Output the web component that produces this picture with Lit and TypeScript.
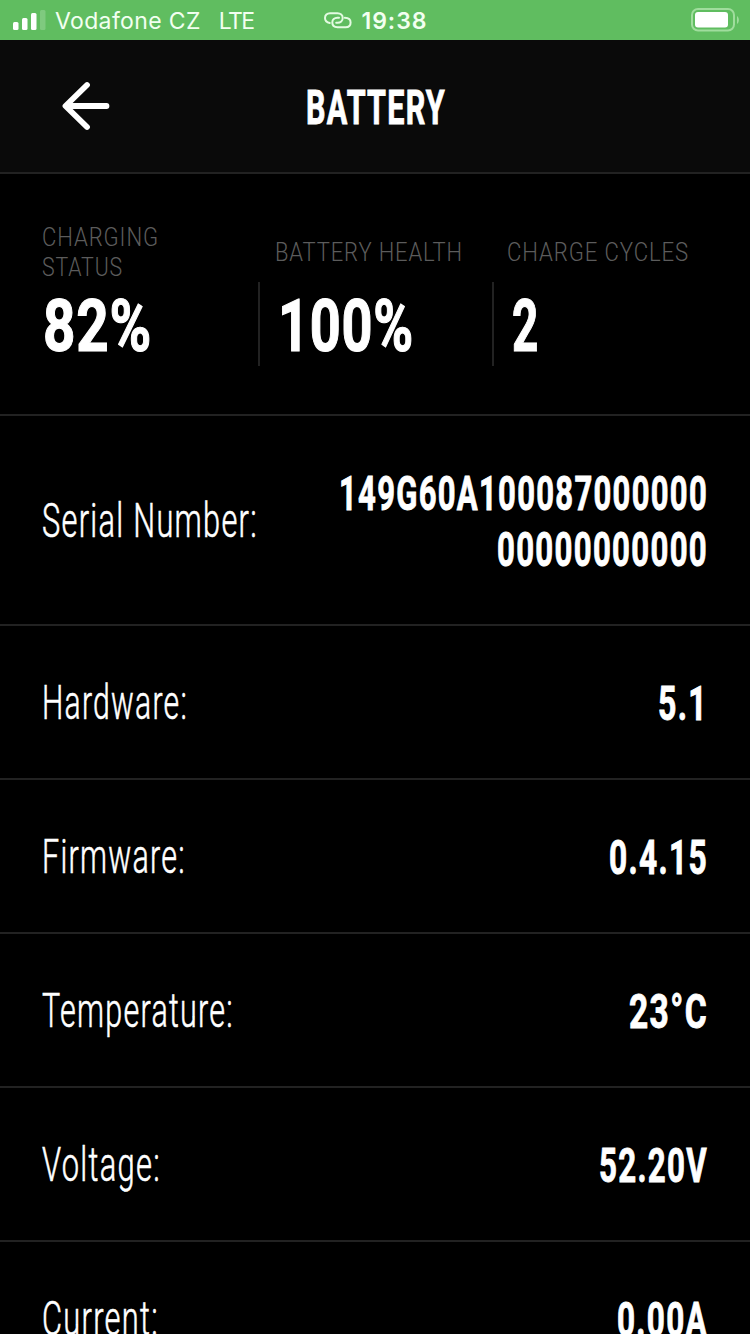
import { html, css, svg, LitElement } from 'lit';
import { customElement, property } from 'lit/decorators.js';

interface Line {
  text: string;
  width: number;
}

const stats = [
  {
    label: [{ text: 'CHARGING', width: 117 }, { text: 'STATUS', width: 81 }],
    value: { text: '82%', width: 109 },
  },
  {
    label: [{ text: 'BATTERY HEALTH', width: 188 }],
    value: { text: '100%', width: 136 },
  },
  {
    label: [{ text: 'CHARGE CYCLES', width: 182 }],
    value: { text: '2', width: 27 },
  },
];

const rows = [
  {
    label: { text: 'Serial Number:', width: 216 },
    value: [{ text: '149G60A100087000000', width: 369 }, { text: '00000000000', width: 211 }],
  },
  { label: { text: 'Hardware:', width: 146 }, value: [{ text: '5.1', width: 50 }] },
  { label: { text: 'Firmware:', width: 144 }, value: [{ text: '0.4.15', width: 99 }] },
  { label: { text: 'Temperature:', width: 192 }, value: [{ text: '23°C', width: 79 }] },
  { label: { text: 'Voltage:', width: 119 }, value: [{ text: '52.20V', width: 109 }] },
  { label: { text: 'Current:', width: 117 }, value: [{ text: '0.00A', width: 91 }] },
];

// One line of text: glyphs narrowed by a factor, then fitted to the exact width
@customElement('narrow-text')
class NarrowText extends LitElement {
  static styles = css`
    :host {
      display: block;
    }

    svg {
      display: block;
      overflow: visible;
    }

    text {
      fill: currentColor;
      stroke: currentColor;
      stroke-width: var(--text-stroke, 0);
    }
  `;

  @property({ type: Object }) line: Line = { text: '', width: 0 };
  @property({ type: Number }) height = 56;
  @property({ type: Number }) baseline = 44;
  @property({ type: Number }) narrow = 0.66;

  render() {
    const { text, width } = this.line;

    return html`
      <svg width=${width + 2} height=${this.height}>
        ${svg`<text
          transform="translate(1 0) scale(${this.narrow} 1)"
          y=${this.baseline}
          textLength=${width / this.narrow}
          lengthAdjust="spacingAndGlyphs"
        >${text}</text>`}
      </svg>
    `;
  }
}

@customElement('status-bar')
class StatusBar extends LitElement {
  static styles = css`
    :host {
      display: grid;
      grid-template-columns: 1fr auto 1fr;
      height: 40px;
      padding: 0 11px 0 13px;
      box-sizing: border-box;
      align-items: center;
      color: #f2fff0;
      background: #60bd60;
      font-family: Inter, 'Liberation Sans', sans-serif;
      font-size: 23px;
    }

    svg {
      display: block;
    }

    span {
      padding-top: 2px;
    }

    .carrier,
    .clock {
      display: flex;
      align-items: center;
    }

    .name {
      margin-left: 9px;
      letter-spacing: 0.35px;
    }

    .network {
      margin-left: 18px;
      letter-spacing: -1.6px;
    }

    .clock {
      gap: 9px;
      font-weight: 600;
      letter-spacing: 1px;
    }

    .battery {
      justify-self: end;
    }
  `;

  render() {
    return html`
      <div class="carrier">
        <svg width="33" height="20" viewBox="0 0 33 20" fill="#fff">
          <rect x="0" y="12" width="5.5" height="8" rx="1.5" />
          <rect x="9" y="8" width="5.5" height="12" rx="1.5" />
          <rect x="18" y="3" width="5.5" height="17" rx="1.5" />
          <rect x="27" y="0" width="5.5" height="20" rx="1.5" opacity="0.2" />
        </svg>
        <span class="name">Vodafone CZ</span>
        <span class="network">LTE</span>
      </div>
      <div class="clock">
        <svg width="28" height="18" viewBox="0 0 28 18" fill="none" stroke="#e4fbe2" stroke-width="2" stroke-linecap="round">
          <path d="M5.8 12C2.8 11.4 1 9.5 1 7C1 4.2 3 2.3 6 2.3H13.5C16.5 2.3 18.7 4.2 18.7 7C18.7 9.8 16.5 11.8 13.5 11.8H12.2" />
          <path d="M20.8 6.8C24.5 7 26.6 8.8 26.6 11.4C26.6 14.3 24.6 16.2 21.6 16.2H13.5C10.4 16.2 8.3 14.3 8.3 11.5C8.3 8.7 10.4 6.8 13.4 6.8H15" />
        </svg>
        <span>19:38</span>
      </div>
      <svg class="battery" width="48" height="24" viewBox="0 0 48 24">
        <rect x="1" y="1" width="42" height="21.5" rx="6" fill="none" stroke="#a0dd9d" stroke-width="2" />
        <rect x="4" y="4" width="33" height="15.5" rx="3" fill="#fff" />
        <path d="M46 8C48.5 10 48.5 14 46 16Z" fill="#a0dd9d" />
      </svg>
    `;
  }
}

@customElement('app-root')
class AppRoot extends LitElement {
  static styles = css`
    :host {
      display: block;
      height: 1334px;
      overflow: hidden;
      color: #fff;
      background: #000;
      font-family: Roboto, 'Liberation Sans', sans-serif;
      font-size: 48px;
    }

    .header {
      display: grid;
      grid-template-columns: 1fr auto 1fr;
      height: 134px;
      padding: 0 59px 2px 60px;
      box-sizing: border-box;
      align-items: center;
      background: #0a0a0a;
      border-bottom: 2px solid #222;
    }

    .title,
    .value {
      font-weight: 700;
      letter-spacing: 2px;
      --text-stroke: 0.9px;
    }

    .stats {
      display: grid;
      grid-template-columns: 258px 234px 1fr;
      height: 242px;
      padding-top: 48px;
      box-sizing: border-box;
      border-bottom: 2px solid #222;
    }

    .stat {
      display: flex;
      flex-direction: column;
    }

    .caption {
      display: flex;
      flex-direction: column;
      justify-content: center;
      height: 60px;
      padding-left: 16px;
      color: #5c5c5c;
      font-size: 25px;
      font-weight: 300;
      letter-spacing: 1px;
    }

    .amount {
      height: 84px;
      padding-left: 17px;
      border-left: 2px solid #222;
      font-size: 72px;
      font-weight: 700;
      letter-spacing: 1px;
      --text-stroke: 1.2px;
    }

    .stat:first-child .caption {
      padding-left: 41px;
    }

    .stat:first-child .amount {
      padding-left: 42px;
      border-left: 0;
    }

    .stat:last-child .caption {
      padding-left: 14px;
    }

    .row {
      display: flex;
      justify-content: space-between;
      align-items: center;
      height: 154px;
      padding: 0 41px;
      box-sizing: border-box;
      border-bottom: 2px solid #222;
    }

    .row:first-child {
      height: 210px;
    }

    .label {
      font-weight: 300;
      letter-spacing: 2px;
      --text-stroke: 0.6px;
    }

    .value {
      display: flex;
      flex-direction: column;
      align-items: flex-end;
    }
  `;

  render() {
    return html`
      <status-bar></status-bar>
      <div class="header">
        <svg width="52" height="52" viewBox="0 0 52 52" fill="none" stroke="#fff" stroke-width="5.8" stroke-linecap="round" stroke-linejoin="round">
          <path d="M27 6L5.5 27L27 48M6 27H46.5" />
        </svg>
        <narrow-text class="title" .line=${{ text: 'BATTERY', width: 140 }} .baseline=${47}></narrow-text>
      </div>
      <div class="stats">${stats.map((stat) => this.makeStat(stat))}</div>
      <div>${rows.map((row) => this.makeRow(row))}</div>
    `;
  }

  makeStat(stat: { label: Line[]; value: Line }) {
    return html`
      <div class="stat">
        <div class="caption">
          ${stat.label.map((line) => html`<narrow-text .line=${line} .height=${30} .baseline=${24} .narrow=${0.88}></narrow-text>`)}
        </div>
        <div class="amount">
          <narrow-text .line=${stat.value} .height=${84} .baseline=${69.5}></narrow-text>
        </div>
      </div>
    `;
  }

  makeRow(row: { label: Line; value: Line[] }) {
    return html`
      <div class="row">
        <narrow-text class="label" .line=${row.label} .baseline=${45} .narrow=${0.63}></narrow-text>
        <div class="value">
          ${row.value.map((line) => html`<narrow-text .line=${line} .baseline=${46}></narrow-text>`)}
        </div>
      </div>
    `;
  }
}
